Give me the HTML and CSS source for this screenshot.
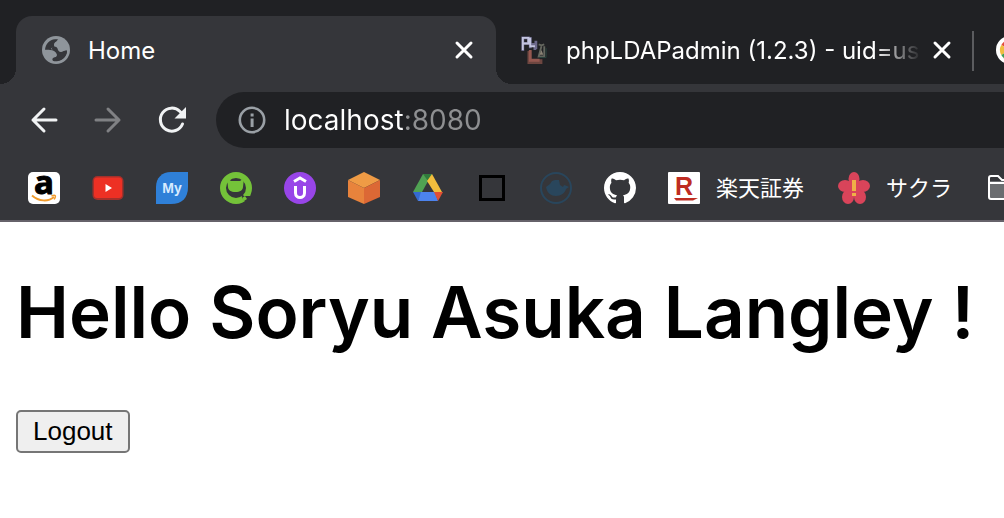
FILE: index.html
```html
<!DOCTYPE html>
<html lang="en">
<head>
<meta charset="utf-8">
<title>Home</title>
<link rel="stylesheet" href="styles.css">
</head>
<body>
<header class="browser">
  <div class="tabs" role="tablist" aria-label="Open tabs">
    <div class="tab tab-active">
      <button class="tab-select" role="tab" aria-selected="true">
        <svg class="favicon" viewBox="0 0 28 28" aria-hidden="true">
          <circle cx="14" cy="14" r="14" fill="#8f959b"/>
          <path fill="#35363a" d="M3 13.8C3.500 8 7.500 3.700 13 3.300c1.200-.1 2.700 0 3.400.3.500 1.200-.2 2.200-1.400 2.400-2.200.4-2.800 2-2.500 3.500.2 1.300-.7 2.300-2.200 2.300-1.500 0-1.200 1.500-.5 1.900 2.200.4 5.400-.6 6.300 2.100.3 1 1.300 1.400 2.300 1.200 2.400-.4 3.200-2.600 5.400-2.400l1.200.1c-.2 5.200-3.900 9.300-8.900 10.300-2.100.5-4.100.2-5.100-.3-.6-1.300-.2-2.700 1.200-3 1.800-.3 3.100-1.300 2.600-3.200-.4-1.500-1.700-1.200-2.500-2.300-1.300-2-3.700-2.400-9.300-2.400z"/>
          <path fill="#8f959b" d="M16 3c-1 3-4 3-4 6 0 2 2 2 3 2.500 2 1 2 4 5 3.500 2-.4 4-1 5-1C25 8 22 4 16 3z"/>
          <path fill="#8f959b" d="M1 14.500h9c3 0 4.500 1.500 4.500 3.500 0 3-4 2-4 4.500v3L5 24z"/>
          <path fill="#35363a" d="M10.500 11c2-1 4.500 0 5 1.500.7 2.500 2 4 4.500 3.200l5-1.200c0 6-5 10.500-11 10.500-1.500 0-3-.4-3.500-.8-.2-2 .3-2.600 2-2.800 2-.2 3-1.200 2.700-3-.2-1.500-1.500-2-2.500-3-1-1-1.200-1.600-3.200-1.600z"/>
        </svg>
        <span class="tab-title">Home</span>
      </button>
      <button class="tab-close" aria-label="Close Home">
        <svg viewBox="0 0 20 20"><path d="M3 3l14 14M17 3L3 17"/></svg>
      </button>
    </div>
    <div class="tab tab-background">
      <button class="tab-select" role="tab" aria-selected="false">
        <svg class="favicon" viewBox="0 0 28 30" aria-hidden="true">
          <path d="M9 16v12h12v-3" fill="none" stroke="#6d4640" stroke-width="4"/>
          <path d="M10 15v11h10" fill="none" stroke="#955850" stroke-width="3"/>
          <path d="M2 16V2h6v6H3M10 1v12M9 9h6v6M16 5v9" fill="none" stroke="#6d6a8c" stroke-width="3"/>
          <path d="M2 15V2h6v6H2M10 2v9h5" fill="none" stroke="#c3c5e0" stroke-width="2"/>
          <path d="M19 9l3 1 3-1M22 11l-3 11h6V11" fill="none" stroke="#65675f" stroke-width="2"/>
          <path d="M22 15l-2 5h4z" fill="#8b8375"/>
          <path d="M27 13v10h-8" fill="none" stroke="#29443d" stroke-width="1"/>
        </svg>
        <span class="tab-title">phpLDAPadmin (1.2.3) - uid=us</span>
      </button>
      <button class="tab-close" aria-label="Close phpLDAPadmin">
        <svg viewBox="0 0 20 20"><path d="M3 3l14 14M17 3L3 17"/></svg>
      </button>
    </div>
    <button class="tab-next" role="tab" aria-selected="false" aria-label="Next tab">
      <svg class="favicon" viewBox="0 0 28 28" aria-hidden="true">
        <circle cx="14" cy="14" r="14" fill="#fff"/>
        <path d="M14 14L5.300 9A10 10 0 0 1 22.700 9z" fill="#e34b3d"/>
        <path d="M14 14L5.300 19A10 10 0 0 1 5.300 9z" fill="#f0bd40"/>
        <path d="M14 14v10A10 10 0 0 1 5.300 19z" fill="#3e9c55"/>
      </svg>
    </button>
  </div>

  <div class="toolbar">
    <button class="tool" aria-label="Back">
      <svg viewBox="0 0 32 32"><path d="M28 16H5M16 5L5 16l11 11"/></svg>
    </button>
    <button class="tool tool-muted" aria-label="Forward">
      <svg viewBox="0 0 32 32"><path d="M4 16h23M16 5l11 11-11 11"/></svg>
    </button>
    <button class="tool" aria-label="Reload">
      <svg viewBox="0 0 32 32"><path d="M26.500 20A11.500 11.500 0 1 1 24 7.500l2 2"/><path class="solid" d="M30 3v11.500H18.500z"/></svg>
    </button>
    <div class="omnibox">
      <button class="site-info" aria-label="Site information">
        <svg viewBox="0 0 28 28"><circle cx="14" cy="14" r="12.200" fill="none" stroke="#9aa0a6" stroke-width="2.600"/><path d="M12.600 7.500h3v3h-3zM12.600 12.500h3v8.500h-3z" fill="#9aa0a6"/></svg>
      </button>
      <input class="address" type="text" value="localhost:8080" aria-label="Address" spellcheck="false">
    </div>
  </div>

  <nav class="bookmarks" aria-label="Bookmarks">
    <a href="#" aria-label="Amazon"><svg viewBox="0 0 32 32"><rect width="32" height="32" rx="5" fill="#fff"/><text class="logo-amazon" x="16" y="22" text-anchor="middle">a</text><path d="M4 23.500c7 6 16 6.500 22 1.500" fill="none" stroke="#f19b2c" stroke-width="2"/><path d="M23.500 24c4-1.500 5-.5 2.700 3.500" fill="none" stroke="#f19b2c" stroke-width="1.500"/></svg></a>
    <a href="#" aria-label="YouTube"><svg viewBox="0 0 32 32"><rect x="0.500" y="4" width="31" height="24" rx="5" fill="#a3302b"/><rect x="2" y="5.500" width="28" height="20.500" rx="3" fill="#ed3024"/><path d="M13.500 12v8l6.500-4z" fill="#fff"/></svg></a>
    <a href="#" aria-label="My"><svg viewBox="0 0 32 32"><path d="M0 32V15C0 6 6 0 15 0h17v15c0 11-6 17-17 17z" fill="#2f80d8"/><text class="logo-my" x="16" y="21" text-anchor="middle">My</text></svg></a>
    <a href="#" aria-label="Green cat"><svg viewBox="0 0 32 32"><circle cx="16" cy="16" r="13" fill="none" stroke="#74c239" stroke-width="6"/><path d="M7 6l4 3h9l4-3-1 9c0 3-3 5-7.500 5S8 18 8 15z" fill="#74c239"/><path d="M21 21l3 3h8v8h-5l-5-6z" fill="#35363a"/><path d="M22 26l3-2 2 3-3 2zM25 21l6 2-2 1z" fill="#74c239"/></svg></a>
    <a href="#" aria-label="Udemy"><svg viewBox="0 0 32 32"><circle cx="16" cy="16" r="16" fill="#9845e8"/><path d="M10 9.500l6-3.500 6 3.500M11.500 14v7c0 6 9 6 9 0v-7" fill="none" stroke="#fff" stroke-width="3"/></svg></a>
    <a href="#" aria-label="AWS"><svg viewBox="0 0 32 32"><path d="M16 0l16 8-16 8L0 8z" fill="#ef9b45"/><path d="M0 8l16 8v16L0 25z" fill="#e8833c"/><path d="M32 8l-16 8v16l16-7z" fill="#dc6835"/></svg></a>
    <a href="#" aria-label="Drive"><svg viewBox="0 0 32 32"><path d="M11 2h9L10 20H1z" fill="#50a253"/><path d="M11 2h9l-4 7z" fill="#317b3c"/><path d="M20 2l10 18h-8L15 9z" fill="#f2bd3d"/><path d="M1 20h9l-4 9z" fill="#346ad0"/><path d="M9 20h14l3 9H6z" fill="#4c83ed"/><path d="M22 20h9l-5 9z" fill="#e24f35"/></svg></a>
    <a href="#" aria-label="Square"><svg viewBox="0 0 32 32"><rect x="4.500" y="4.500" width="23" height="23" fill="none" stroke="#000" stroke-width="3"/></svg></a>
    <a href="#" aria-label="Docker"><svg viewBox="0 0 32 32"><circle cx="16" cy="16" r="15" fill="none" stroke="#29465c" stroke-width="2"/><path d="M6 15l4-3 2-3 3-1h4l1 5 3 2 1-2 3 1 2 1-3 2c-1 4-5 7-10 7-5 0-9-3-10-9z" fill="#29465c"/></svg></a>
    <a href="#" aria-label="GitHub"><svg viewBox="0 0 16 16"><path fill="#fff" d="M8 0C3.580 0 0 3.580 0 8c0 3.540 2.290 6.530 5.470 7.590.4.070.55-.17.55-.38 0-.19-.01-.82-.01-1.490-2.010.37-2.530-.49-2.690-.94-.09-.23-.48-.94-.82-1.130-.28-.15-.68-.52-.01-.53.63-.01 1.080.58 1.230.82.72 1.210 1.870.87 2.330.66.070-.52.28-.87.51-1.070-1.780-.2-3.640-.89-3.640-3.950 0-.87.31-1.590.82-2.150-.08-.2-.36-1.020.08-2.120 0 0 .67-.21 2.200.82.64-.18 1.320-.27 2-.27s1.360.09 2 .27c1.530-1.040 2.200-.82 2.200-.82.44 1.100.16 1.920.08 2.120.51.56.82 1.270.82 2.150 0 3.070-1.870 3.750-3.650 3.950.29.25.54.73.54 1.480 0 1.070-.01 1.930-.01 2.200 0 .21.15.46.55.38A8 8 0 0 0 16 8c0-4.420-3.580-8-8-8z"/></svg></a>
    <a href="#"><svg viewBox="0 0 32 32" aria-hidden="true"><rect width="32" height="32" rx="1" fill="#fff"/><text class="logo-rakuten" x="16" y="23" text-anchor="middle">R</text><path d="M6 26h24l-5 2.500H8z" fill="#be2c22"/></svg><span lang="ja">楽天証券</span></a>
    <a href="#"><svg viewBox="0 0 32 32" aria-hidden="true"><g fill="#d9445a"><ellipse cx="16" cy="7" rx="5.500" ry="7"/><ellipse cx="7" cy="14" rx="7" ry="6"/><ellipse cx="25" cy="14" rx="7" ry="6"/><ellipse cx="10" cy="25" rx="6" ry="7"/><ellipse cx="22" cy="25" rx="6" ry="7"/><circle cx="16" cy="16" r="9"/></g><path d="M14 8h4v11h-4zM14 21h4v3h-4z" fill="#efb047"/></svg><span lang="ja">サクラ</span></a>
    <a href="#" aria-label="Folder"><svg viewBox="0 0 32 32"><path d="M3 9h28v17H3z" fill="#6b6d70"/><path d="M3 25V6q0-2 2-2h7l4 4h13q2 0 2 2v15q0 2-2 2H5q-2 0-2-2zM3 11h28" fill="none" stroke="#fff" stroke-width="2"/></svg></a>
  </nav>
</header>

<main class="page">
  <h1>Hello Soryu Asuka Langley !</h1>
  <button class="logout">Logout</button>
</main>
</body>
</html>
```
FILE: styles.css
```css
* {
  box-sizing: border-box;
}

body {
  margin: 0;
  overflow-x: hidden;
  background: #fff;
  color: #000;
  font-family: Inter, "Noto Sans CJK JP", sans-serif;
}

button {
  margin: 0;
  padding: 0;
  border: 0;
  background: none;
  color: inherit;
  font: inherit;
}

svg {
  display: block;
  flex: none;
}

.browser {
  overflow: hidden;
  border-bottom: 2px solid #66626a;
  background: #35363a;
  color: #fff;
}

.tabs {
  display: flex;
  padding: 16px 0 0 16px;
  background: #202124;
}

.tab {
  position: relative;
  display: flex;
  flex: none;
  align-items: center;
  width: 480px;
  height: 68px;
  padding: 0 20px 0 26px;
  font-size: 24px;
}

.tab-active {
  border-radius: 16px 16px 0 0;
  background: #35363a;
}

.tab-active::before,
.tab-active::after {
  content: "";
  position: absolute;
  bottom: 0;
  width: 16px;
  height: 16px;
}

.tab-active::before {
  right: 100%;
  background: radial-gradient(circle at 0 0, #202124 16px, #35363a 16px);
}

.tab-active::after {
  left: 100%;
  background: radial-gradient(circle at 100% 0, #202124 16px, #35363a 16px);
}

.tab-background {
  width: 478px;
  padding: 0 20px 0 24px;
}

.tab-background::after {
  content: "";
  position: absolute;
  top: 15px;
  right: 0;
  width: 2px;
  height: 40px;
  background: #5b5c5f;
}

.tab-select {
  display: flex;
  flex: 1;
  align-items: center;
  gap: 18px;
  min-width: 0;
  text-align: left;
}

.favicon {
  width: 28px;
  height: 28px;
}

.tab-title {
  flex: 1;
  white-space: nowrap;
}

.tab-background .tab-title {
  mask-image: linear-gradient(to left, transparent, #000 48px);
}

.tab-close {
  margin-left: 8px;
  padding: 2px;
}

.tab-close svg {
  width: 20px;
  height: 20px;
  fill: none;
  stroke: #fff;
  stroke-linecap: round;
  stroke-width: 3;
}

.tab-next {
  flex: none;
  padding: 0 22px;
}

.toolbar {
  display: flex;
  align-items: center;
  padding: 8px 0 8px 12px;
}

.tool {
  display: grid;
  flex: none;
  place-items: center;
  width: 64px;
  height: 56px;
}

.tool svg {
  width: 32px;
  height: 32px;
  fill: none;
  stroke: #f1f3f4;
  stroke-linecap: round;
  stroke-linejoin: round;
  stroke-width: 3;
}

.tool-muted svg {
  stroke: #808184;
}

.tool .solid {
  fill: #f1f3f4;
  stroke: none;
}

.omnibox {
  display: flex;
  flex: 1;
  align-items: center;
  gap: 18px;
  height: 56px;
  margin-left: 12px;
  padding-left: 22px;
  border-radius: 28px 0 0 28px;
  background: #202124;
}

.site-info svg {
  width: 28px;
  height: 28px;
}

.address {
  flex: 1;
  min-width: 0;
  height: 40px;
  padding: 0;
  border: 0;
  outline: 0;
  background: linear-gradient(to right, #fff 120px, #8e8f91 120px) text;
  color: transparent;
  font: 28px Inter, sans-serif;
}

.bookmarks {
  display: flex;
  align-items: center;
  gap: 32px;
  height: 64px;
  padding-left: 28px;
}

.bookmarks a {
  display: flex;
  flex: none;
  align-items: center;
  gap: 16px;
  color: #fff;
  font-size: 22px;
  line-height: 32px;
  text-decoration: none;
}

.bookmarks span {
  padding-right: 2px;
}

.bookmarks svg {
  width: 32px;
  height: 32px;
}

.logo-amazon {
  fill: #000;
  stroke: #000;
  stroke-width: 1px;
  font: bold 33px "Open Sans", sans-serif;
}

.logo-my {
  fill: #d8ebff;
  font: bold 14px "Liberation Sans", sans-serif;
}

.logo-rakuten {
  fill: #be2c22;
  font: bold 25px "Liberation Sans", sans-serif;
}

.page {
  padding: 48px 16px;
}

h1 {
  margin: 0 0 56px;
  font-size: 71px;
  font-weight: 600;
  line-height: 84px;
  white-space: nowrap;
}

.logout {
  padding: 4px 15px;
  border: 2px solid #767676;
  border-radius: 5px;
  background: #efefef;
  color: #000;
  font: 26px/31px "Liberation Sans", sans-serif;
}
```
